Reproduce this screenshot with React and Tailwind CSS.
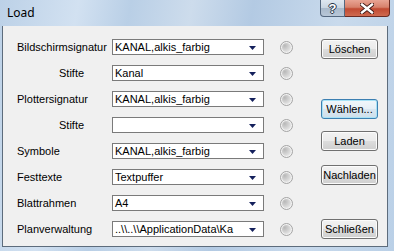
import React from 'react';

const rows = [
    { label: 'Bildschirmsignatur', value: 'KANAL,alkis_farbig' },
    { label: 'Stifte', value: 'Kanal', indent: true },
    { label: 'Plottersignatur', value: 'KANAL,alkis_farbig' },
    { label: 'Stifte', value: '', indent: true },
    { label: 'Symbole', value: 'KANAL,alkis_farbig' },
    { label: 'Festtexte', value: 'Textpuffer' },
    { label: 'Blattrahmen', value: 'A4' },
    { label: 'Planverwaltung', value: '..\\\\..\\\\ApplicationData\\Ka' },
];

const Combo = ({ value }) => (
    <div className="relative w-[152px] h-[16px] bg-white border border-[#7a7a7a] flex items-center overflow-hidden">
        <span className="pl-[2px] pr-[18px] whitespace-nowrap overflow-hidden leading-none">{value}</span>
        <svg className="absolute right-[7px] top-[6px]" width="7" height="4" viewBox="0 0 7 4">
            <polygon points="0,0 7,0 3.5,4" fill="#14205c" />
        </svg>
    </div>
);

const Radio = () => (
    <div className="ml-[16px] w-[13px] h-[13px] rounded-full border border-[#a4a4a4] bg-[#f2f2f2] flex items-center justify-center">
        <div className="w-[9px] h-[9px] rounded-full bg-[radial-gradient(circle_at_30%_30%,#b8b8b8,#d8d8d8_55%,#f4f4f4)]" />
    </div>
);

const Button = ({ children, focused, className = '' }) => (
    <div
        className={
            'w-[57px] h-[20px] rounded-[3px] border flex items-center justify-center leading-none ' +
            (focused
                ? 'border-[#3c7fb1] bg-[linear-gradient(#f1f7fb_0%,#e6eff6_50%,#d9e6f0_51%,#cfdfeb_100%)] shadow-[inset_0_0_0_1px_#a8e2f6] '
                : 'border-[#707070] bg-[linear-gradient(#f2f2f2_0%,#ebebeb_50%,#dddddd_51%,#cfcfcf_100%)] shadow-[inset_0_0_0_1px_#fcfcfc] ') +
            className
        }
    >
        {children}
    </div>
);

export default function App() {
    return (
        <div className="w-[394px] h-[251px] flex flex-col bg-[linear-gradient(100deg,#bcd1e7_0%,#d2e1f1_18%,#b9cfe6_30%,#cddcec_44%,#b3cae3_58%,#c9daec_78%,#bad0e7_100%)] font-['Liberation_Sans',Arial,sans-serif] text-[11px] text-black">
            {/* title bar */}
            <div className="h-[26px] flex items-start justify-between">
                <span className="mt-[7px] ml-[7px] text-[12px] font-['Noto_Sans',sans-serif] leading-none">Load</span>
                <div className="flex mr-[4px]">
                    <div className="w-[25px] h-[17px] rounded-bl-[4px] border border-t-0 border-[#54677f] bg-[linear-gradient(#dfe7f0_0%,#c9d5e2_50%,#a9b9cb_51%,#b8c7d8_100%)] flex items-center justify-center">
                        <span className="text-white font-bold text-[13px] leading-none [text-shadow:0_0_1px_#2a3548,1px_0_0_#2a3548,-1px_0_0_#2a3548,0_1px_0_#2a3548,0_-1px_0_#2a3548]">?</span>
                    </div>
                    <div className="w-[45px] h-[17px] rounded-br-[4px] border border-l-0 border-t-0 border-[#6a2a22] bg-[linear-gradient(#e8a493_0%,#d7816c_45%,#c14a32_55%,#cf6a50_100%)] flex items-center justify-center">
                        <svg width="14" height="11" viewBox="0 0 14 11">
                            <path d="M2 1.5 L12 9.5 M12 1.5 L2 9.5" stroke="#3a1410" strokeWidth="4.2" strokeLinecap="square" />
                            <path d="M2 1.5 L12 9.5 M12 1.5 L2 9.5" stroke="#ffffff" strokeWidth="2.4" strokeLinecap="square" />
                        </svg>
                    </div>
                </div>
            </div>

            {/* frame + client */}
            <div className="flex-1 flex">
                <div className="w-[2px]" />
                <div className="flex-1 flex flex-col">
                    <div className="flex-1 bg-[#f0f0f0] border-l border-r border-b border-[#5d6c7c] flex pt-[13px] pl-[14px]">
                        <div className="flex flex-col gap-[10px]">
                            {rows.map((r, i) => (
                                <div key={i} className="h-[16px] flex items-center">
                                    <div className="w-[95px] leading-none">
                                        <span className={r.indent ? 'ml-[42px]' : ''}>{r.label}</span>
                                    </div>
                                    <Combo value={r.value} />
                                    <Radio />
                                </div>
                            ))}
                        </div>
                        <div className="ml-[28px] flex flex-col">
                            <Button>Löschen</Button>
                            <Button focused className="mt-[40px]">Wählen...</Button>
                            <Button className="mt-[12px]">Laden</Button>
                            <Button className="mt-[14px]">Nachladen</Button>
                            <Button className="mt-[34px]">Schließen</Button>
                        </div>
                    </div>
                    <div className="h-[4px]" />
                </div>
                <div className="w-[6px]" />
            </div>
        </div>
    );
}
